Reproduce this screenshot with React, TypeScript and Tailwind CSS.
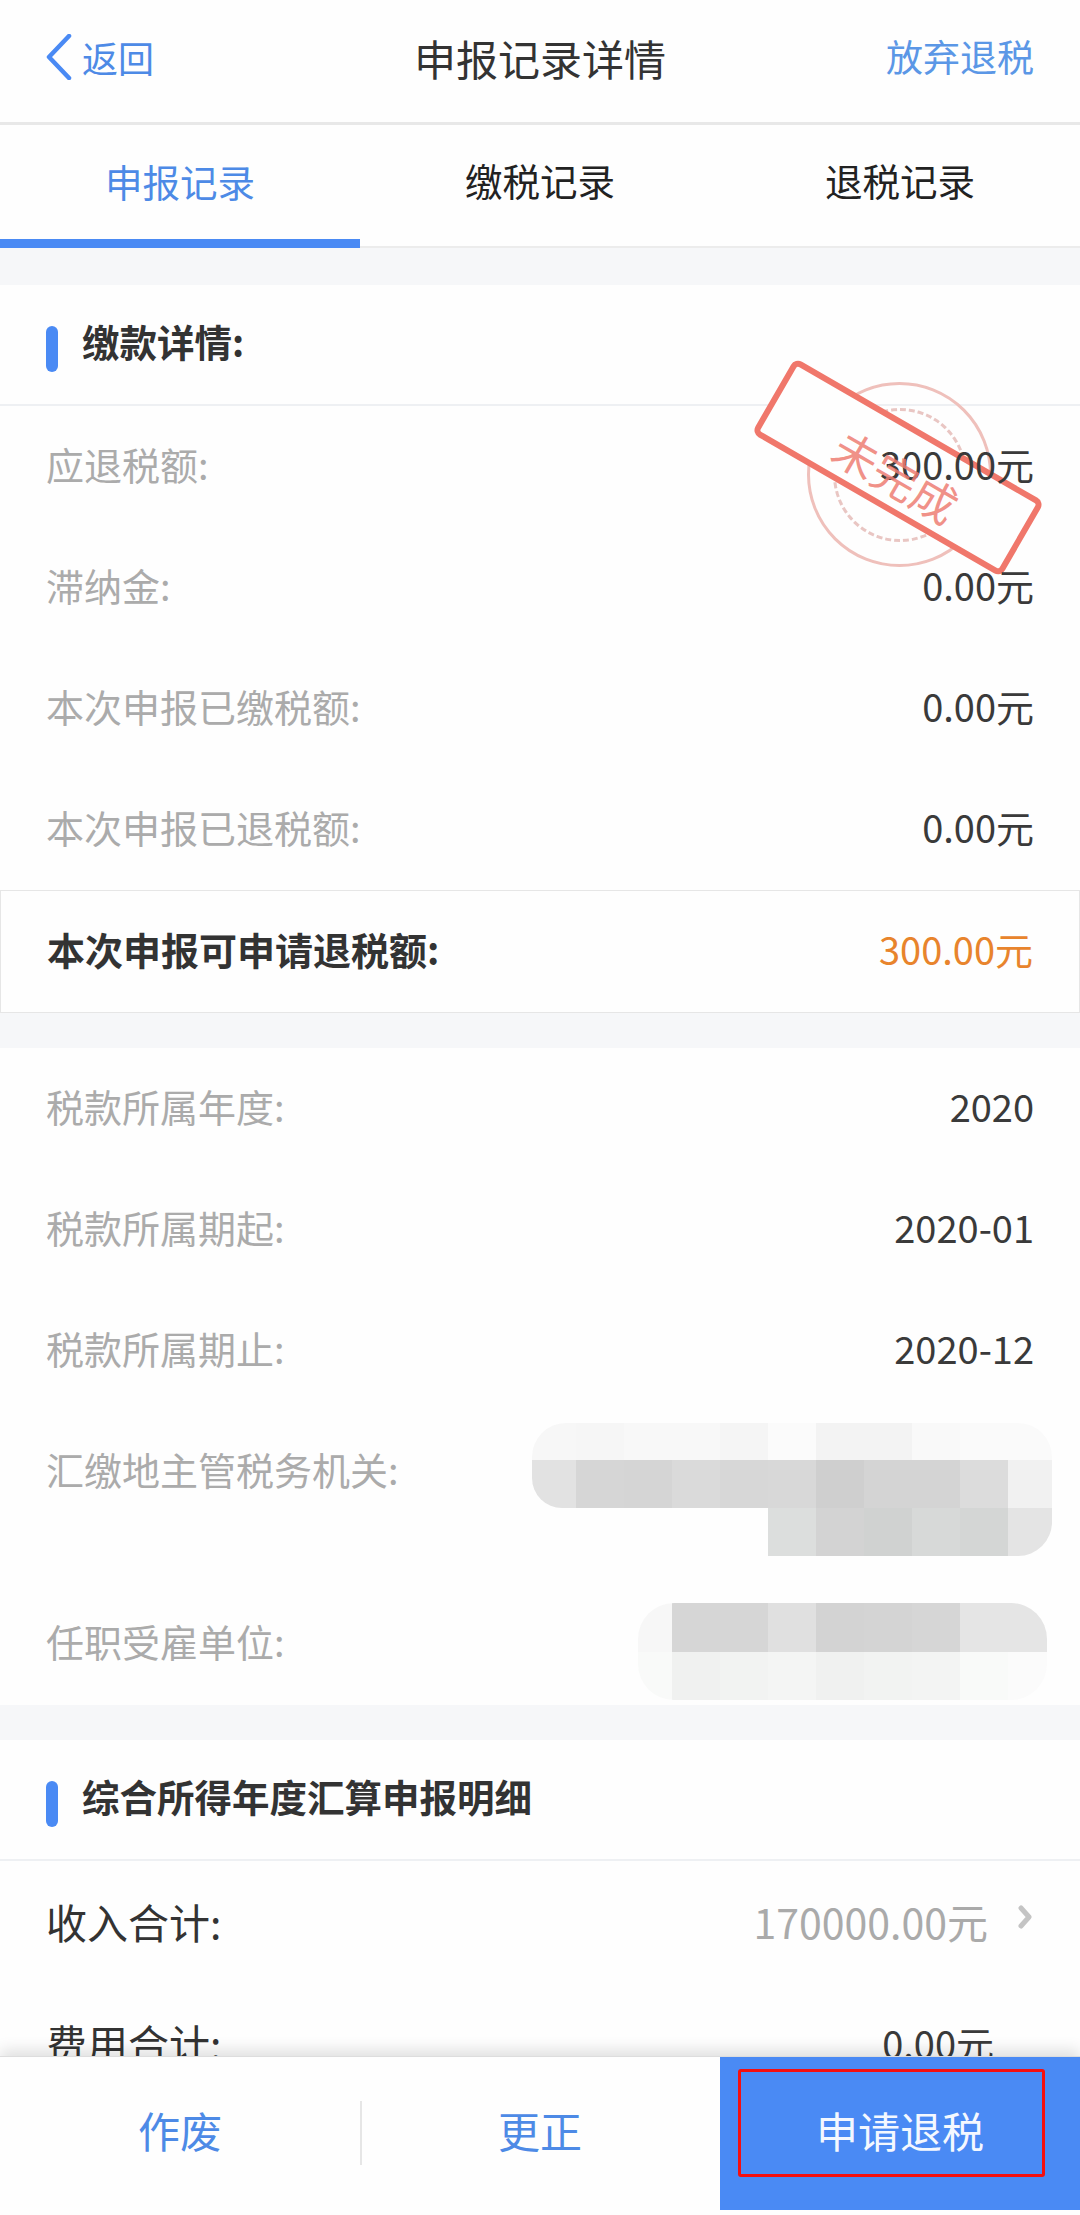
const font = { fontFamily: '"Noto Sans CJK SC", "Noto Sans", sans-serif' };

const mosaicAddress = [
    ["#f7f7f7", "#f6f6f6", "#f8f8f8", "#f8f8f8", "#f5f5f5", "#fbfbfb", "#f3f3f3", "#f3f3f3", "#f9f9f9", "#fafafa", "#fafafa"],
    ["#e2e2e2", "#d6d6d6", "#d5d5d5", "#dadada", "#d7d7d7", "#d8d8d8", "#cfcfcf", "#d4d4d4", "#d4d4d4", "#dcdcdc", "#f1f1f1"],
    ["", "", "", "", "", "#dcdedd", "#d3d3d3", "#d0d2d1", "#d7d9d8", "#d4d6d5", "#e4e4e4"],
];

const mosaicEmployer = [
    ["#f7f7f7", "#d6d6d6", "#d6d6d6", "#e0e0e0", "#d3d3d3", "#d4d4d4", "#d6d6d6", "#e5e5e5", "#e5e5e5"],
    ["#f9faf9", "#f0f1f0", "#f2f3f2", "#f4f5f4", "#f0f1f0", "#f2f3f2", "#f3f4f3", "#f9faf9", "#fbfbfb"],
];

function Row({ label, value }: { label: string; value: string }) {
    return (
        <div className="relative z-10 flex h-[121px] items-center justify-between px-[46px] pb-[6px]">
            <span className="text-[38px] text-[#ababab]">{label}</span>
            <span className="text-[38px] text-[#3a3a3a]">{value}</span>
        </div>
    );
}

function SectionHeader({ title }: { title: string }) {
    return (
        <div className="flex h-[121px] items-center gap-[24px] border-b-2 border-[#eef0f3] px-[46px]">
            <div className="mt-[9px] h-[46px] w-[12px] rounded-full bg-[#4a8af4]" />
            <span className="-mt-[6px] text-[37.5px] font-bold text-[#333333]">{title}</span>
        </div>
    );
}

function Stamp() {
    return (
        <>
            {/* circle and plate sit under the row text */}
            <div className="absolute left-[807px] top-[382px] z-0 flex h-[185px] w-[185px] items-center justify-center rounded-full border-[3px] border-[#efc0bb]">
                <div className="h-[134px] w-[134px] rounded-full border-[3px] border-dashed border-[#e9c6c3]" />
            </div>
            <div className="absolute left-[754px] top-[424px] z-0 h-[87px] w-[288px] rotate-30 rounded-[8px] border-[6px] border-[#f0776b] bg-[#fefefe]" />
            <div className="absolute left-[757px] top-[424px] z-20 flex h-[87px] w-[288px] rotate-30 items-center justify-center pt-[18px] text-[45px] text-[#ee7d73]/85">
                未完成
            </div>
        </>
    );
}

export default function App() {
    return (
        <div className="relative h-[2215px] w-[1080px] overflow-hidden bg-[#f6f7f9]" style={font}>
            {/* Nav */}
            <div className="flex h-[125px] items-center justify-between border-b-[3px] border-[#e8e8e8] bg-[#fefefe] pb-[8px] pl-[46px] pr-[46px]">
                <div className="flex w-[240px] items-center gap-[10px] text-[36px] text-[#4d8ae6]">
                    <svg width="26" height="46" viewBox="0 0 26 46" fill="none">
                        <path d="M23 2 L3 23 L23 44" stroke="#4a8af4" strokeWidth="4.5" strokeLinecap="round" strokeLinejoin="round" />
                    </svg>
                    <span>返回</span>
                </div>
                <span className="text-[42px] text-[#333333]">申报记录详情</span>
                <span className="flex w-[240px] justify-end text-[37px] text-[#5b97e6]">放弃退税</span>
            </div>

            {/* Tabs */}
            <div className="grid h-[123px] grid-cols-3 border-b-2 border-[#ececec] bg-[#fefefe] text-[37.5px]">
                <div className="-mb-[2px] flex items-center justify-center border-b-[9px] border-[#4a8af4] pb-[2px] text-[#4d8ae6]">申报记录</div>
                <div className="flex items-center justify-center pb-[11px] text-[#222222]">缴税记录</div>
                <div className="flex items-center justify-center pb-[11px] text-[#222222]">退税记录</div>
            </div>

            <div className="h-[37px]" />

            {/* 缴款详情 */}
            <div className="bg-[#fefefe]">
                <SectionHeader title="缴款详情:" />
                <Row label="应退税额:" value="300.00元" />
                <Row label="滞纳金:" value="0.00元" />
                <Row label="本次申报已缴税额:" value="0.00元" />
                <Row label="本次申报已退税额:" value="0.00元" />
                <div className="flex h-[123px] items-center justify-between border border-[#e6e6e6] px-[46px] pb-[6px]">
                    <span className="text-[38px] font-bold text-[#333333]">本次申报可申请退税额:</span>
                    <span className="text-[38px] text-[#e8842c]">300.00元</span>
                </div>
            </div>

            <div className="h-[35px]" />

            {/* 税款所属 */}
            <div className="bg-[#fefefe]">
                <Row label="税款所属年度:" value="2020" />
                <Row label="税款所属期起:" value="2020-01" />
                <Row label="税款所属期止:" value="2020-12" />
                <div className="flex h-[164px] items-start justify-between pl-[46px] pr-[28px] text-[38px]">
                    <span className="flex h-[115px] items-center text-[#ababab]">汇缴地主管税务机关:</span>
                    <div className="mt-[12px] grid grid-cols-[44px_repeat(9,48px)_44px] grid-rows-[37px_48px_48px] overflow-hidden rounded-[34px]">
                        {mosaicAddress.flat().map((color, i) => (
                            <div
                                key={i}
                                className={i === 11 ? "rounded-bl-[30px]" : ""}
                                style={{ backgroundColor: color || "#fefefe" }}
                            />
                        ))}
                    </div>
                </div>
                <div className="flex h-[130px] items-start justify-between pl-[46px] pr-[33px] text-[38px]">
                    <span className="mt-[41px] leading-[50px] text-[#ababab]">任职受雇单位:</span>
                    <div className="mt-[28px] grid grid-cols-[34px_repeat(7,48px)_39px] grid-rows-[49px_48px] overflow-hidden rounded-[36px]">
                        {mosaicEmployer.flat().map((color, i) => (
                            <div key={i} style={{ backgroundColor: color }} />
                        ))}
                    </div>
                </div>
            </div>

            <div className="h-[35px]" />

            {/* 汇算明细 */}
            <div className="bg-[#fefefe] pb-[60px]">
                <SectionHeader title="综合所得年度汇算申报明细" />
                <div className="flex h-[121px] items-center justify-between pl-[46px] pr-[48px]">
                    <span className="text-[41px] text-[#333333]">收入合计:</span>
                    <div className="flex items-center gap-[30px]">
                        <span className="text-[41px] text-[#aaaaaa]">170000.00元</span>
                        <svg width="14" height="24" viewBox="0 0 14 24" fill="none" className="-mt-[10px]">
                            <path d="M3 3 L11 12 L3 21" stroke="#c4c4c4" strokeWidth="5" strokeLinecap="round" strokeLinejoin="round" />
                        </svg>
                    </div>
                </div>
                <div className="flex h-[121px] items-center justify-between pl-[46px] pr-[86px]">
                    <span className="text-[41px] text-[#333333]">费用合计:</span>
                    <span className="text-[38px] text-[#3a3a3a]">0.00元</span>
                </div>
            </div>

            <Stamp />

            {/* Bottom bar */}
            <div className="absolute inset-x-0 bottom-0 z-30 grid h-[159px] grid-cols-[360px_360px_360px] border-t border-[#dddddd] bg-[#fefefe] pb-[5px] text-[42px] shadow-[0_-6px_14px_rgba(0,0,0,0.12)]">
                <div className="flex items-center justify-center pb-[9px] text-[#4d8ae6]">作废</div>
                <div className="relative flex items-center justify-center pb-[9px] text-[#4d8ae6]">
                    <div className="absolute left-0 top-[44px] h-[64px] w-[2px] bg-[#e6e6e6]" />
                    更正
                </div>
                <div className="relative flex items-center justify-center bg-[#4a8af4] pb-[9px] text-[#f4f8ff]">
                    申请退税
                    <div className="absolute left-[18px] top-[12px] h-[108px] w-[307px] rounded-[3px] border-[3px] border-[#f50f0f]" />
                </div>
            </div>
        </div>
    );
}
